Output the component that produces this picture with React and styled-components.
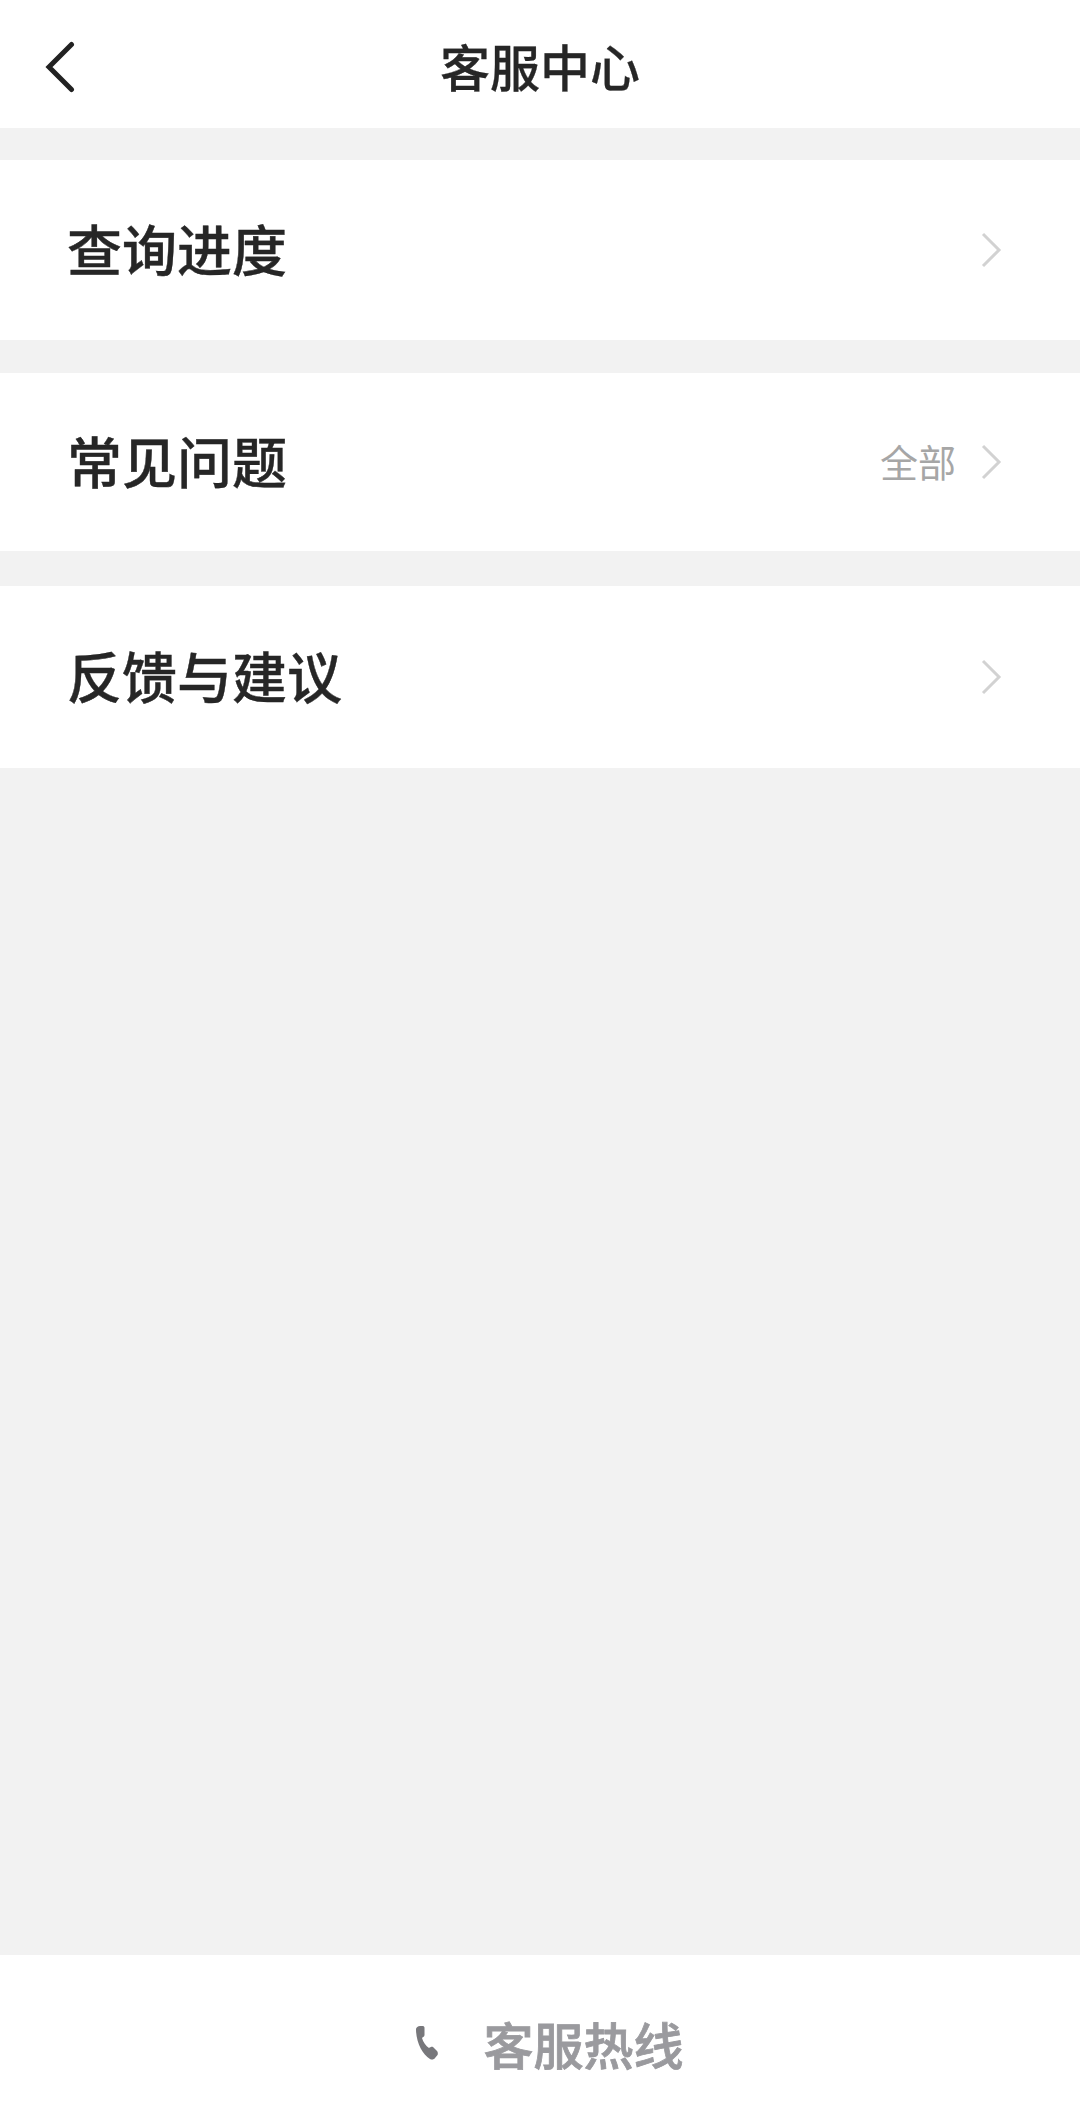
import styled, { createGlobalStyle } from 'styled-components';

const GlobalStyle = createGlobalStyle`
  html, body {
    margin: 0;
    padding: 0;
    background: #f2f2f2;
  }
  body {
    font-family: "Noto Sans CJK SC", "Noto Sans", sans-serif;
  }
`;

const Page = styled.div`
  height: 2121px;
  display: flex;
  flex-direction: column;
  background: #f2f2f2;
`;

const Header = styled.header`
  height: 128px;
  flex: none;
  position: relative;
  display: flex;
  align-items: center;
  justify-content: center;
  background: #fff;
`;

const BackButton = styled.button`
  position: absolute;
  left: 44px;
  top: 41px;
  width: 32px;
  height: 52px;
  padding: 0;
  border: none;
  background: none;
`;

const Title = styled.h1`
  margin: 2px 0 0;
  font-size: 50px;
  line-height: 1;
  font-weight: 500;
  color: #262626;
  -webkit-text-stroke: 0.3px #262626;
`;

const Menu = styled.ul`
  list-style: none;
  margin: 0;
  padding: 0;
  display: flex;
  flex-direction: column;
`;

const Row = styled.li`
  height: ${(p) => p.$height}px;
  margin-top: ${(p) => p.$gap}px;
  padding: 0 78px 0 67px;
  display: flex;
  align-items: center;
  background: #fff;
`;

const RowLabel = styled.span`
  flex: 1;
  margin-bottom: 5px;
  font-size: 55px;
  line-height: 1;
  font-weight: 500;
  color: #262626;
  -webkit-text-stroke: 0.4px #262626;
`;

const RowHint = styled.span`
  margin: 0 24px 2px 0;
  font-size: 38px;
  line-height: 1;
  color: #a6a6a6;
`;

const Spacer = styled.div`
  flex: 1;
`;

const Footer = styled.footer`
  height: 166px;
  flex: none;
  padding: 10px 0 0 18px;
  box-sizing: border-box;
  display: flex;
  align-items: center;
  justify-content: center;
  gap: 45px;
  background: #fff;
`;

const HotlineText = styled.span`
  font-size: 50px;
  line-height: 1;
  font-weight: 500;
  color: #9a9a9e;
  -webkit-text-stroke: 0.8px #9a9a9e;
`;

const Chevron = () => (
  <svg width="22" height="36" viewBox="0 0 22 36" fill="none">
    <path d="M3 2L19 18L3 34" stroke="#d2d2d2" strokeWidth="3" />
  </svg>
);

const PhoneIcon = () => (
  <svg width="24" height="36" viewBox="0 0 24 36" fill="#77777b">
    <path d="M1 4C1 2.5 3 1 5 1L8 1C9 1 9.5 2 9.5 3L9.5 10C9.5 11.5 8 12 7 13C8 17 11 21 14 23C15 22.5 16.5 21.5 18 22L22 26C23 27 23 29 22.5 30L20 33C19 34.5 17 35 15 34C7 29 1 17 1 4Z" />
  </svg>
);

const items = [
  { label: '查询进度', height: 180, gap: 32 },
  { label: '常见问题', hint: '全部', height: 178, gap: 33 },
  { label: '反馈与建议', height: 182, gap: 35 },
];

const App = () => (
  <Page>
    <GlobalStyle />
    <Header>
      <BackButton aria-label="返回">
        <svg width="32" height="52" viewBox="0 0 32 52" fill="none">
          <path d="M27.5 3.5L5 26L27.5 48.5" stroke="#222" strokeWidth="5" strokeLinecap="round" />
        </svg>
      </BackButton>
      <Title>客服中心</Title>
    </Header>
    <Menu>
      {items.map((item) => (
        <Row key={item.label} $height={item.height} $gap={item.gap}>
          <RowLabel>{item.label}</RowLabel>
          {item.hint && <RowHint>{item.hint}</RowHint>}
          <Chevron />
        </Row>
      ))}
    </Menu>
    <Spacer />
    <Footer>
      <PhoneIcon />
      <HotlineText>客服热线</HotlineText>
    </Footer>
  </Page>
);

export default App;
